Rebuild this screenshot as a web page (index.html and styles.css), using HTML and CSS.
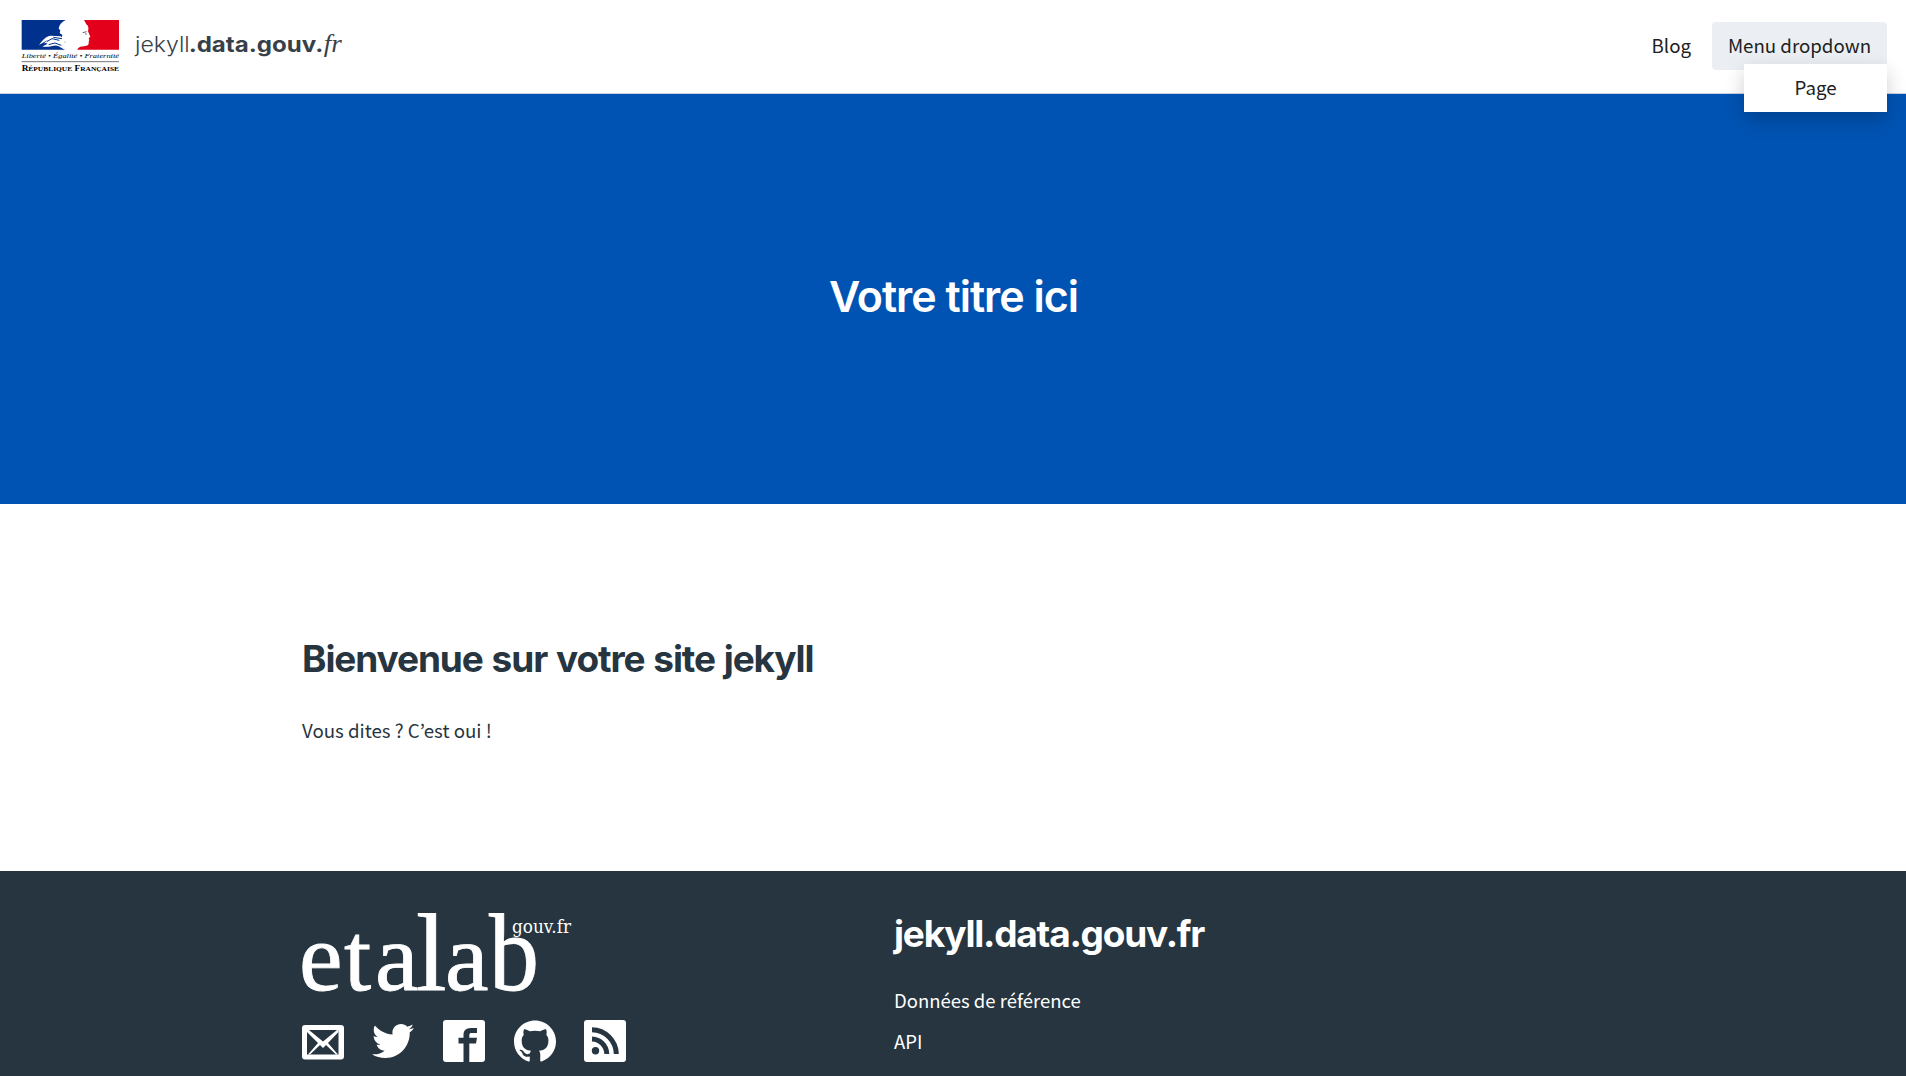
FILE: index.html
```html
<!DOCTYPE html>
<html lang="fr">
<head>
<meta charset="utf-8">
<title>jekyll.data.gouv.fr</title>
<link rel="stylesheet" href="styles.css">
</head>
<body>
<header class="navbar">
  <a class="brand" aria-label="jekyll.data.gouv.fr">
    <svg class="brand-logo" width="330" height="60" viewBox="48 42 990 180">
      <path fill="#00318c" d="M65 60H197C184 66 177 76 176 86L181 91 179 99 187 105 185 117 196 127 191 139 195 149H65Z"/>
      <path fill="#e2001a" d="M252 60H357V149H232C237 139 244 140 256 138C266 136 267 131 266 125L268 120 266 115 271 110 264 94C267 84 265 78 259 73Z"/>
      <path fill="#fff" d="M117 135C128 120 138 108 152 107L182 109 192 117 200 149H194L176 139C164 131 153 143 127 140L143 129 132 130 144 119Z"/>
      <path fill="none" stroke="#00318c" stroke-width="3" d="M140 125L156 116 178 121M146 134L165 129 184 136M160 112L186 116M130 135L140 132"/>
      <path fill="none" stroke="#666" stroke-width="3" d="M248 98L260 95M255 101L260 103"/>
      <text class="motto" x="65" y="175" textLength="292" lengthAdjust="spacingAndGlyphs">Liberté • Égalité • Fraternité</text>
      <path stroke="#333" stroke-width="2" d="M65 185H357"/>
      <text class="republic" x="65" y="212" textLength="292" lengthAdjust="spacingAndGlyphs">R<tspan class="caps">ÉPUBLIQUE</tspan> F<tspan class="caps">RANÇAISE</tspan></text>
      <text class="site-light" x="405" y="157" textLength="164" lengthAdjust="spacingAndGlyphs">jekyll</text>
      <text class="site-bold" x="566" y="157" textLength="404" lengthAdjust="spacingAndGlyphs">.data.gouv.</text>
      <text class="site-italic" x="971" y="157" textLength="54" lengthAdjust="spacingAndGlyphs">fr</text>
    </svg>
  </a>
  <nav class="nav">
    <a class="nav-link">Blog</a>
    <div class="dropdown">
      <a class="dropdown-toggle">Menu dropdown</a>
      <div class="dropdown-menu"><a>Page</a></div>
    </div>
  </nav>
</header>
<section class="hero"><h1>Votre titre ici</h1></section>
<main class="content">
  <h2>Bienvenue sur votre site jekyll</h2>
  <p>Vous dites ? C’est oui !</p>
</main>
<footer class="footer">
  <div class="footer-about">
    <svg class="etalab" width="280" height="84" viewBox="302 910 280 84">
      <text class="etalab-name" y="990"><tspan x="299">e</tspan><tspan x="344">t</tspan><tspan x="375">a</tspan><tspan class="tall" x="416">l</tspan><tspan x="445">a</tspan></text>
      <text class="etalab-name tall" x="489" y="990" textLength="50" lengthAdjust="spacingAndGlyphs">b</text>
      <text class="etalab-domain" x="512" y="933" textLength="59" lengthAdjust="spacingAndGlyphs">gouv.fr</text>
    </svg>
    <div class="social">
      <svg viewBox="0 0 42 42"><path fill-rule="evenodd" d="M3 5H39Q42 5 42 8V36.500Q42 39.500 39 39.500H3Q0 39.500 0 36.500V8Q0 5 3 5ZM5 10V34.500H36.500V10Z"/><path d="M5 10H7L21 21.500 35 10H36.500V12L26 23 36 34.500H34L24 25 21 28 18 25 8 34.500H6L16 23 5 12Z"/></svg>
      <svg class="bird" viewBox="0 0 24 24"><path d="M23.954 4.569c-.885.389-1.83.654-2.825.775 1.014-.611 1.794-1.574 2.163-2.723-.951.555-2.005.959-3.127 1.184-.896-.959-2.173-1.559-3.591-1.559-2.717 0-4.92 2.203-4.92 4.917 0 .39.045.765.127 1.124C7.691 8.094 4.066 6.13 1.64 3.161c-.427.722-.666 1.561-.666 2.475 0 1.71.87 3.213 2.188 4.096-.807-.026-1.566-.248-2.228-.616v.061c0 2.385 1.693 4.374 3.946 4.827-.413.111-.849.171-1.296.171-.314 0-.615-.03-.916-.086.631 1.953 2.445 3.377 4.604 3.417-1.68 1.319-3.809 2.105-6.102 2.105-.39 0-.779-.023-1.17-.067 2.189 1.394 4.768 2.209 7.557 2.209 9.054 0 13.999-7.496 13.999-13.986 0-.209 0-.42-.015-.63.961-.689 1.8-1.56 2.46-2.548l-.047-.02z"/></svg>
      <svg viewBox="0 0 42 42"><path d="M3 0H39Q42 0 42 3V39Q42 42 39 42H26.300V23.500H33L34 17.800H26.300V15.500C26.300 13.500 27 13 29 13H34V8H28C22.500 8 20.500 11 20.500 15V17.800H15.500V23.500H20.500V42H3Q0 42 0 39V3Q0 0 3 0Z"/></svg>
      <svg viewBox="0 0 16 16"><path d="M8 .2C3.580.2 0 3.780 0 8.200c0 3.540 2.290 6.530 5.470 7.590.4.070.55-.17.55-.38 0-.19-.01-.82-.01-1.490-2.010.37-2.530-.49-2.690-.94-.09-.23-.48-.94-.82-1.130-.28-.15-.68-.52-.01-.53.63-.01 1.080.58 1.230.82.72 1.210 1.870.87 2.330.66.07-.52.28-.87.51-1.070-1.780-.2-3.640-.89-3.640-3.950 0-.87.31-1.590.82-2.150-.08-.2-.36-1.020.08-2.120 0 0 .67-.21 2.200.82.64-.18 1.320-.27 2-.27s1.360.09 2 .27c1.530-1.040 2.200-.82 2.200-.82.44 1.100.16 1.920.08 2.120.51.56.82 1.270.82 2.150 0 3.070-1.870 3.750-3.650 3.950.29.25.54.73.54 1.480 0 1.070-.01 1.930-.01 2.200 0 .21.15.46.55.38A8.010 8.010 0 0 0 16 8.200C16 3.780 12.420.2 8 .2Z"/></svg>
      <svg viewBox="0 0 42 42"><rect width="42" height="42" rx="3"/><g class="waves"><path d="M8 9.700A24.700 24.700 0 0 1 32.300 34M8 19A15.300 15.300 0 0 1 22.800 34"/></g><circle class="dot" cx="11.500" cy="30.700" r="3.700"/></svg>
    </div>
  </div>
  <div class="footer-links">
    <h2>jekyll.data.gouv.fr</h2>
    <ul><li><a>Données de référence</a></li><li><a>API</a></li></ul>
  </div>
</footer>
</body>
</html>
```
FILE: styles.css
```css
* { box-sizing: border-box; }
body {
  margin: 0;
  height: 1076px;
  overflow: hidden;
  background: #fff;
  color: #26353f;
  font-family: "Noto Sans CJK KR", sans-serif;
  font-size: 18.7px;
  line-height: 30px;
}
h1, h2, p, ul { margin: 0; }
.navbar {
  display: flex;
  align-items: center;
  justify-content: space-between;
  height: 94px;
  padding: 0 19px 2px 16px;
  border-bottom: 1px solid #c9d3df;
}
.brand-logo { display: block; margin-bottom: 3px; }
.motto { font: italic 21px "Liberation Serif", serif; }
.republic { font: bold 25px "Liberation Serif", serif; }
.caps { font-size: 20px; }
.site-light { font: 300 64px Inter, sans-serif; fill: #383f48; }
.site-bold { font: 700 64px Inter, sans-serif; fill: #383f48; }
.site-italic { font: italic 78px "Liberation Serif", serif; fill: #383f48; }
.nav { display: flex; align-items: center; gap: 21px; color: #212121; }
.nav-link { margin-bottom: 2px; }
.dropdown { position: relative; }
.dropdown-toggle {
  display: block;
  width: 175px;
  padding: 8px 0 10px;
  border-radius: 4px;
  background: #ebeff3;
  text-align: center;
}
.dropdown-menu {
  position: absolute;
  top: 42px;
  right: 0;
  width: 143px;
  padding: 8px 0 10px;
  background: #fff;
  box-shadow: 0 8px 20px rgba(0, 0, 0, .2);
  text-align: center;
}
.hero {
  display: flex;
  justify-content: center;
  align-items: center;
  height: 410px;
  padding: 0 0 7px 1px;
  background: #0053b3;
  color: #fff;
}
.hero h1 { font: 600 43px/60px Inter, sans-serif; letter-spacing: -1px; }
.content { height: 367px; padding: 128px 302px 0; }
.content h2 { font: 700 37px/54px Inter, sans-serif; letter-spacing: -1.1px; word-spacing: 1.2px; }
.content p { margin-top: 29px; }
.footer {
  display: grid;
  grid-template-columns: 592px 1fr;
  height: 205px;
  padding: 38px 302px 0;
  background: #26353f;
  color: #fff;
}
.etalab { display: block; margin-top: 1px; fill: #fff; overflow: visible; }
.etalab-name { font: 98px "Liberation Serif", serif; stroke: #fff; stroke-width: .8px; }
.tall { font-size: 110px; }
.etalab-domain { font: 19px "DejaVu Serif", serif; }
.social { display: flex; gap: 28.500px; margin-top: 26px; fill: #fff; }
.social svg { width: 42px; height: 42px; }
.social .bird { position: relative; left: -1px; }
.waves { fill: none; stroke: #26353f; stroke-width: 5px; }
.dot { fill: #26353f; }
.footer-links h2 { font: 700 37px/50px Inter, sans-serif; letter-spacing: -1.2px; }
.footer-links ul { margin-top: 26px; padding: 0; list-style: none; font-size: 18.5px; }
.footer-links li { margin-bottom: 11px; }
```
